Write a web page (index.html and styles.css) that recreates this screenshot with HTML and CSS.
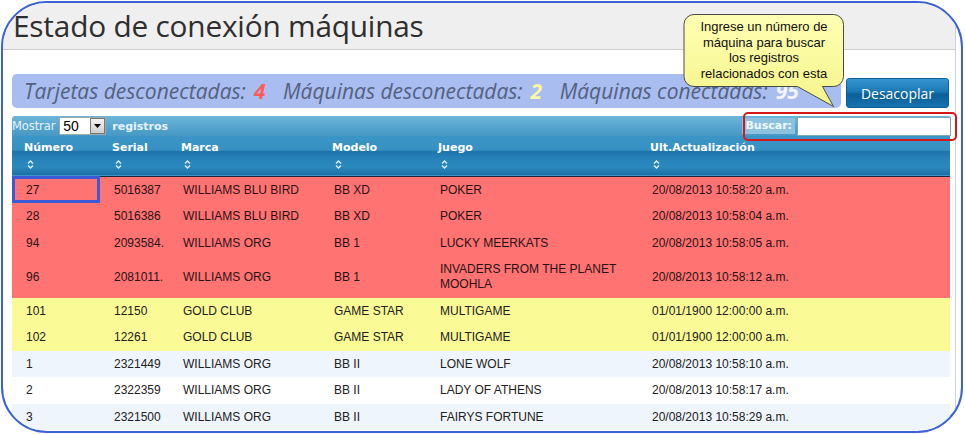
FILE: index.html
```html
<!DOCTYPE html>
<html lang="es">
<head>
<meta charset="utf-8">
<title>Estado de conexión máquinas</title>
<link rel="stylesheet" href="styles.css">
</head>
<body>
<div class="frame">
  <div class="page">
    <div class="titlebar"><h1 class="title">Estado de conexión máquinas</h1></div>
    <div class="content">
      <div class="statsrow">
        <div class="stats">
          <span>Tarjetas desconectadas:</span><b class="n-red">4</b>
          <span>Máquinas desconectadas:</span><b class="n-yellow">2</b>
          <span>Máquinas conectadas:</span><b class="n-white">95</b>
        </div>
        <button class="btn">Desacoplar</button>
      </div>
      <div class="grid">
        <div class="toolbar">
          <div class="length">
            <span class="lbl-mostrar">Mostrar</span>
            <span class="select"><span class="select-val">50</span><span class="select-btn"><svg width="7" height="4" viewBox="0 0 7 4"><path d="M0 0h7L3.5 4z" fill="#000"/></svg></span></span>
            <span class="lbl-reg">registros</span>
          </div>
          <div class="filter">
            <span class="lbl-buscar">Buscar:</span>
            <span class="input"></span>
          </div>
        </div>
        <table class="tbl">
          <colgroup>
            <col class="c1"><col class="c2"><col class="c3"><col class="c4"><col class="c5"><col class="c6">
          </colgroup>
          <thead>
            <tr>
              <th>Número<i class="sort"></i></th>
              <th>Serial<i class="sort"></i></th>
              <th>Marca<i class="sort"></i></th>
              <th>Modelo<i class="sort"></i></th>
              <th>Juego<i class="sort"></i></th>
              <th>Ult.Actualización<i class="sort"></i></th>
            </tr>
          </thead>
          <tbody>
            <tr class="red"><td class="focus">27</td><td>5016387</td><td>WILLIAMS BLU BIRD</td><td>BB XD</td><td>POKER</td><td>20/08/2013 10:58:20 a.m.</td></tr>
            <tr class="red"><td>28</td><td>5016386</td><td>WILLIAMS BLU BIRD</td><td>BB XD</td><td>POKER</td><td>20/08/2013 10:58:04 a.m.</td></tr>
            <tr class="red"><td>94</td><td>2093584.</td><td>WILLIAMS ORG</td><td>BB 1</td><td>LUCKY MEERKATS</td><td>20/08/2013 10:58:05 a.m.</td></tr>
            <tr class="red"><td>96</td><td>2081011.</td><td>WILLIAMS ORG</td><td>BB 1</td><td>INVADERS FROM THE PLANET MOOHLA</td><td>20/08/2013 10:58:12 a.m.</td></tr>
            <tr class="yellow"><td>101</td><td>12150</td><td>GOLD CLUB</td><td>GAME STAR</td><td>MULTIGAME</td><td>01/01/1900 12:00:00 a.m.</td></tr>
            <tr class="yellow"><td>102</td><td>12261</td><td>GOLD CLUB</td><td>GAME STAR</td><td>MULTIGAME</td><td>01/01/1900 12:00:00 a.m.</td></tr>
            <tr class="odd"><td>1</td><td>2321449</td><td>WILLIAMS ORG</td><td>BB II</td><td>LONE WOLF</td><td>20/08/2013 10:58:10 a.m.</td></tr>
            <tr class="even"><td>2</td><td>2322359</td><td>WILLIAMS ORG</td><td>BB II</td><td>LADY OF ATHENS</td><td>20/08/2013 10:58:17 a.m.</td></tr>
            <tr class="odd"><td>3</td><td>2321500</td><td>WILLIAMS ORG</td><td>BB II</td><td>FAIRYS FORTUNE</td><td>20/08/2013 10:58:29 a.m.</td></tr>
          </tbody>
        </table>
      </div>
    </div>
  </div>
  <div class="highlight"></div>
  <div class="callout">
    <svg class="callout-shape" width="164" height="96" viewBox="0 0 164 96">
      <defs>
        <linearGradient id="cg" x1="0" y1="0" x2="0" y2="1">
          <stop offset="0" stop-color="#ffffb4"/>
          <stop offset="1" stop-color="#f4f48a"/>
        </linearGradient>
      </defs>
      <path d="M11 0.5H150.5a10 10 0 0 1 10 10V62.5a10 10 0 0 1-10 10H139.5L150.5 92.5L114.5 72.5H11a10 10 0 0 1-10-10V10.5a10 10 0 0 1 10-10z" fill="url(#cg)" stroke="#4a4a4a" stroke-width="1"/>
    </svg>
    <div class="callout-text">Ingrese un número de<br>máquina para buscar<br>los registros<br>relacionados con esta</div>
  </div>
</div>
</body>
</html>
```

FILE: styles.css
```css
* { box-sizing: border-box; }
html, body { margin: 0; padding: 0; background: #fff; }
body { width: 965px; height: 434px; overflow: hidden; font-family: "Liberation Sans", Arial, sans-serif; }

.frame {
  position: relative;
  margin: 1px 0 0 1px;
  width: 962px;
  height: 432px;
  border: 2px solid #3b63d6;
  border-radius: 46px;
  overflow: hidden;
  background: #fff;
  display: flex;
}

.page {
  width: 953px;
  flex: none;
  border-right: 1px solid #c8d2e6;
  height: 100%;
}

.titlebar {
  height: 47px;
  background: #efefef;
  border-bottom: 1px solid #cfcfcf;
  padding: 0 0 0 10px;
}
.title {
  margin: 0;
  font-family: "Open Sans", "Noto Sans", sans-serif;
  font-weight: 400;
  font-size: 29.8px;
  line-height: 45px;
  color: #2e2e2e;
  letter-spacing: -0.2px;
}

.content { padding: 24px 4px 0 9px; }

.statsrow { display: flex; align-items: flex-end; gap: 5px; }
.stats {
  flex: 1;
  height: 34px;
  background: #a9bdf1;
  border-radius: 5px;
  padding: 0 0 0 12px;
  font-family: "Open Sans", "Noto Sans", sans-serif;
  font-style: italic;
  font-size: 21px;
  line-height: 34px;
  color: #54617e;
  white-space: nowrap;
  overflow: hidden;
}
.stats span { margin-right: 8px; }
.stats b { font-weight: 700; margin-right: 12px; }
.n-red { color: #ff5c5c; }
.n-yellow { color: #f9f9a2; }
.n-white { color: #f2f4ff; }

.btn {
  width: 103px;
  height: 30px;
  margin-right: 2px;
  border: 1px solid #0f5f95;
  border-radius: 3px;
  background: linear-gradient(#3796cf 0%, #1a79b5 45%, #0b5f99 55%, #1772ad 100%);
  color: #fff;
  font-family: "Open Sans", "Noto Sans", sans-serif;
  font-size: 14px;
  padding: 0;
}

.grid { margin-top: 8px; }

.toolbar {
  height: 20px;
  display: flex;
  justify-content: space-between;
  align-items: center;
  background: linear-gradient(#6cb5da 0%, #58a6d0 50%, #4797c4 100%);
  border-radius: 3px 3px 0 0;
}
.length { display: flex; align-items: center; font-size: 12px; font-weight: 700; color: #e6f3ff; }
.lbl-mostrar { font-family: "DejaVu Sans", sans-serif; font-size: 11.5px; font-weight: 400; letter-spacing: -0.1px; margin-right: 4px; }
.lbl-reg { font-family: "DejaVu Sans", sans-serif; font-size: 11px; margin-left: 6px; }
.select {
  display: flex;
  height: 18px;
  background: #fff;
  border: 1px solid #9aa;
}
.select-val { width: 30px; padding-left: 3px; font-weight: 400; color: #000; font-size: 14px; line-height: 16px; }
.select-btn {
  width: 15px;
  display: flex; align-items: center; justify-content: center;
  background: linear-gradient(#f2f2f2, #cfcfcf);
  border: 1px solid #777;
}
.filter { display: flex; align-items: center; height: 20px; }
.lbl-buscar {
  font-family: "DejaVu Sans", sans-serif;
  font-size: 11px; font-weight: 700; color: #eef8ff;
  background: #8cc2e0;
  padding: 1px 3px;
  margin-right: 2px;
  line-height: 14px;
}
.input { width: 154px; height: 19px; background: #fff; border: 1px solid #7fa6c0; }

.tbl { width: 938px; border-collapse: collapse; table-layout: fixed; }
.c1 { width: 88px; } .c2 { width: 69px; } .c3 { width: 151px; }
.c4 { width: 106px; } .c5 { width: 212px; } .c6 { width: 312px; }

.tbl thead tr {
  background: linear-gradient(#3b95c6 0%, #3790c2 36%, #1d74ab 40%, #2681b8 55%, #2b88bd 80%, #1b6fa6 100%);
  border-bottom: 1px solid #1a2a3a;
}
.tbl th {
  height: 40px;
  text-align: left;
  vertical-align: top;
  padding: 5px 4px 0 12px;
  font-family: "DejaVu Sans", sans-serif;
  font-size: 11px;
  font-weight: 700;
  color: #fff;
  line-height: 13px;
}
.sort {
  display: block;
  width: 7px; height: 9px;
  margin: 6px 0 0 3px;
  background:
    url("data:image/svg+xml,%3Csvg xmlns='http://www.w3.org/2000/svg' width='7' height='9' viewBox='0 0 7 9'%3E%3Cpath d='M1 3.5L3.5 1L6 3.5M1 5.5L3.5 8L6 5.5' fill='none' stroke='%23dfeef8' stroke-width='1.4'/%3E%3C/svg%3E") no-repeat;
}

.tbl td {
  padding: 6px 4px 5.5px 14px;
  font-size: 12px;
  line-height: 15px;
  color: #222;
  vertical-align: middle;
}
.red { background: #ff7373; }
.red td { color: #2b1212; }
.yellow { background: #fafa96; }
.odd { background: #eef5fc; }
.even { background: #fff; }
.focus { outline: 3px solid #3a5ad8; outline-offset: -3px; }

.highlight {
  position: absolute;
  left: 740px; top: 109px;
  width: 214px; height: 29px;
  border: 2px solid #d41818;
  border-radius: 5px;
  pointer-events: none;
}

.callout {
  position: absolute;
  left: 680px; top: 11px;
  width: 164px; height: 96px;
}
.callout-shape { position: absolute; left: 0; top: 0; }
.callout-text {
  position: relative;
  width: 162px;
  padding-top: 5px;
  text-align: center;
  font-size: 13px;
  line-height: 15.5px;
  color: #111;
}
```
